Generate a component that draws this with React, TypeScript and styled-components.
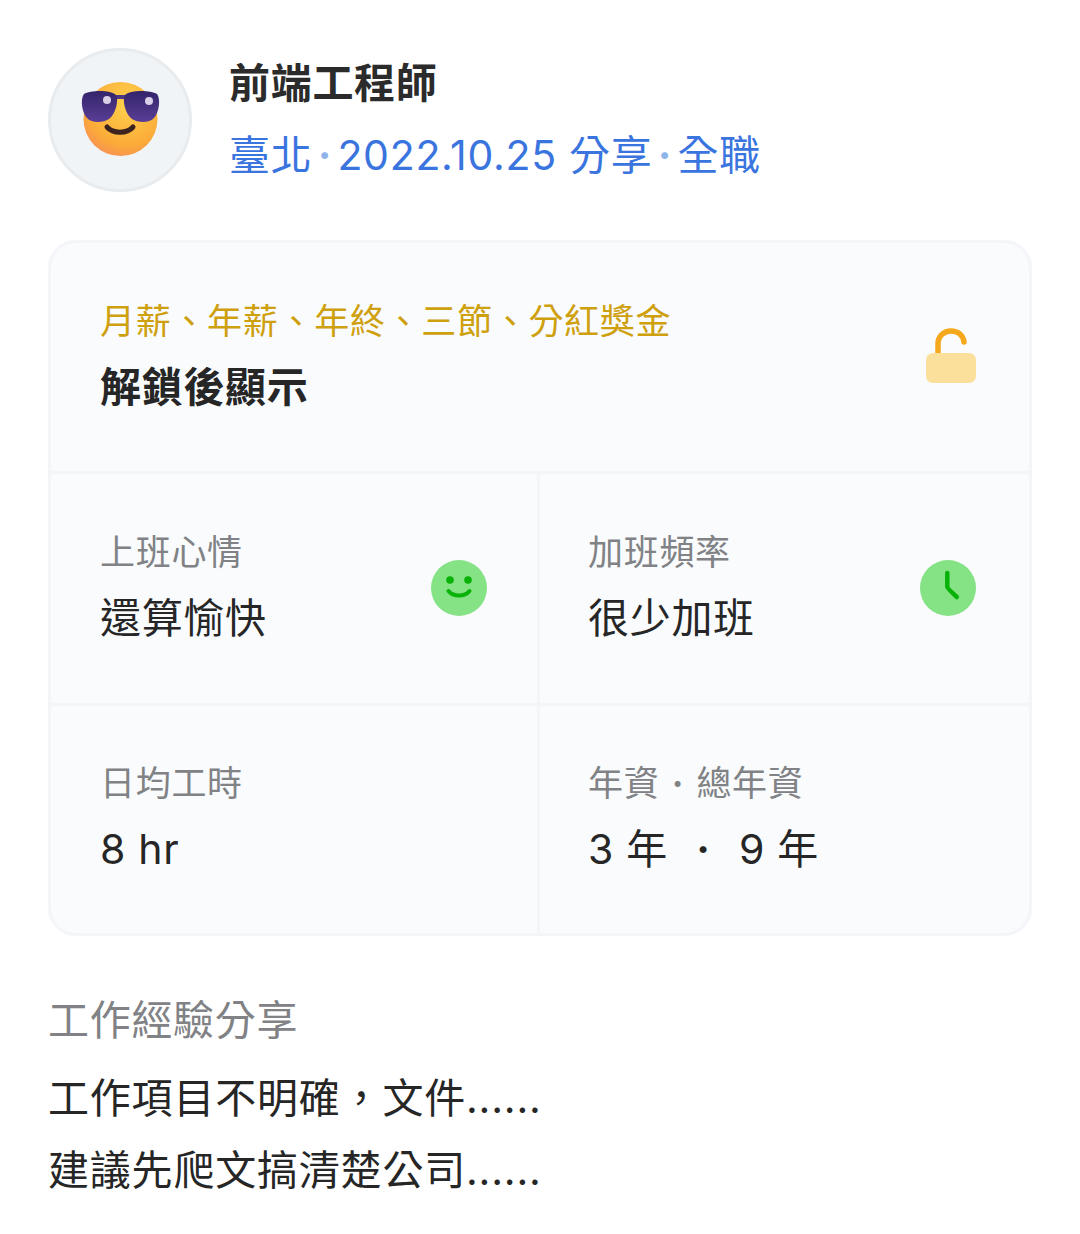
import React from 'react';
import styled, { createGlobalStyle } from 'styled-components';

const GlobalStyle = createGlobalStyle`
  html, body {
    margin: 0;
    padding: 0;
    background: #fff;
  }
  body {
    font-family: Inter, "Noto Sans CJK TC", sans-serif;
    letter-spacing: 0.7px;
  }
`;

const Page = styled.main`
  width: 1080px;
  height: 1234px;
  box-sizing: border-box;
  padding: 48px 48px 0;
  overflow: hidden;
`;

const Header = styled.header`
  display: flex;
  align-items: flex-start;
  gap: 37px;
`;

const Avatar = styled.div`
  width: 144px;
  height: 144px;
  box-sizing: border-box;
  border-radius: 50%;
  background: #f1f4f6;
  border: 3px solid #e9ecef;
  display: flex;
  align-items: center;
  justify-content: center;
  flex-shrink: 0;
`;

const HeaderText = styled.div`
  display: flex;
  flex-direction: column;
  gap: 14px;
  padding-top: 6px;
`;

const JobTitle = styled.h1`
  margin: 0;
  font-size: 41px;
  line-height: 58px;
  font-weight: 700;
  color: #2b2b2b;
`;

const Meta = styled.div`
  display: flex;
  align-items: center;
  font-size: 41px;
  line-height: 58px;
  color: #3a74df;
`;

const Dot = styled.span`
  width: 25px;
  text-align: center;
  font-weight: 700;
  color: #8fb4ea;
`;

const Card = styled.section`
  margin-top: 48px;
  width: 984px;
  box-sizing: border-box;
  border: 3px solid #f3f5f8;
  border-radius: 28px;
  background: #f9fbfd;
  overflow: hidden;
`;

const LockRow = styled.div`
  height: 231px;
  box-sizing: border-box;
  padding: 0 52px 2px 49px;
  display: flex;
  align-items: center;
  justify-content: space-between;
  border-bottom: 3px solid #f3f5f8;
`;

const Grid = styled.div`
  display: grid;
  grid-template-columns: 489px 1fr;
  grid-template-rows: 232px 227px;
`;

const Cell = styled.div<{ $right?: boolean; $last?: boolean }>`
  box-sizing: border-box;
  padding: 0 ${(p) => (p.$right ? 53 : 50)}px 4px ${(p) => (p.$right ? 48 : 49)}px;
  display: flex;
  align-items: center;
  justify-content: space-between;
  border-right: ${(p) => (p.$right ? 'none' : '3px solid #f3f5f8')};
  border-bottom: ${(p) => (p.$last ? 'none' : '3px solid #f3f5f8')};

  svg {
    margin-top: 3px;
  }
`;

const Stack = styled.div`
  display: flex;
  flex-direction: column;
  gap: 12px;
`;

const Label = styled.div<{ $gold?: boolean }>`
  font-size: 35px;
  line-height: 50px;
  color: ${(p) => (p.$gold ? '#cfa00d' : '#808285')};
  white-space: pre;
`;

const Value = styled.div<{ $bold?: boolean }>`
  font-size: 41px;
  line-height: 58px;
  font-weight: ${(p) => (p.$bold ? 700 : 400)};
  color: #262626;
  white-space: pre;
`;

const LabelSep = styled.span`
  display: inline-block;
  width: 37px;
  text-align: center;
  font-weight: 700;
`;

const ValueSep = styled.span`
  display: inline-block;
  width: 71px;
  text-align: center;
  font-weight: 700;
`;

const Experience = styled.section`
  margin-top: 54px;
  display: flex;
  flex-direction: column;
`;

const ExperienceTitle = styled.h2`
  margin: 0 0 12px;
  font-size: 41px;
  line-height: 60px;
  font-weight: 400;
  color: #808285;
`;

const ExperienceLine = styled.p`
  margin: 0;
  font-size: 41px;
  line-height: 72px;
  letter-spacing: 0.8px;
  color: #262626;
`;

const CoolFace = () => (
  <svg width="83" height="78" viewBox="0 0 83 78">
    <defs>
      <radialGradient id="face" cx="0.6" cy="0.3" r="0.85">
        <stop offset="0" stopColor="#ffd24d" />
        <stop offset="0.65" stopColor="#fbab38" />
        <stop offset="0.9" stopColor="#f88f55" />
        <stop offset="1" stopColor="#f0788a" />
      </radialGradient>
      <linearGradient id="lens" x1="0" y1="0" x2="0" y2="1">
        <stop offset="0" stopColor="#33246b" />
        <stop offset="1" stopColor="#5a3e96" />
      </linearGradient>
    </defs>
    <circle cx="41.5" cy="38" r="37" fill="url(#face)" />
    <path d="M34 16h15" stroke="#4a3a85" strokeWidth="4" />
    <path d="M5 13C12 9 32 9 37 14c3 4 0 19-7 24-6 4-18 4-22-1C3 32 1 18 5 13z" fill="url(#lens)" />
    <path d="M78 13C71 9 51 9 46 14c-3 4 0 19 7 24 6 4 18 4 22-1 5-5 7-19 3-24z" fill="url(#lens)" />
    <circle cx="28" cy="19" r="4" fill="#d9cfe6" />
    <circle cx="70" cy="20" r="4" fill="#d9cfe6" />
    <path d="M28 46c6 7 20 7 26 0" fill="none" stroke="#3c2320" strokeWidth="5" strokeLinecap="round" />
  </svg>
);

const LockIcon = () => (
  <svg width="52" height="56" viewBox="0 0 52 56">
    <path d="M13 26V16C13 8 19 3 26 3s12 4 13 11" fill="none" stroke="#f5a81c" strokeWidth="5.5" strokeLinecap="round" />
    <rect x="1" y="25" width="50" height="30" rx="7" fill="#fbe09b" />
  </svg>
);

const SmileIcon = () => (
  <svg width="56" height="56" viewBox="0 0 56 56">
    <circle cx="28" cy="28" r="28" fill="#85e285" />
    <circle cx="19" cy="20" r="3.8" fill="#08b208" />
    <circle cx="37" cy="20" r="3.8" fill="#08b208" />
    <path d="M17.5 31c5 6 16 6 21 0" fill="none" stroke="#08b208" strokeWidth="4" strokeLinecap="round" />
  </svg>
);

const ClockIcon = () => (
  <svg width="56" height="56" viewBox="0 0 56 56">
    <circle cx="28" cy="28" r="28" fill="#85e285" />
    <path d="M27.3 13v14c0 1 2 3 9.5 10" fill="none" stroke="#08b208" strokeWidth="4.5" strokeLinecap="round" strokeLinejoin="round" />
  </svg>
);

const App: React.FC = () => {
  return (
    <Page>
      <GlobalStyle />
      <Header>
        <Avatar>
          <CoolFace />
        </Avatar>
        <HeaderText>
          <JobTitle>前端工程師</JobTitle>
          <Meta>
            臺北<Dot>·</Dot>2022.10.25 分享<Dot>·</Dot>全職
          </Meta>
        </HeaderText>
      </Header>

      <Card>
        <LockRow>
          <Stack>
            <Label $gold>月薪、年薪、年終、三節、分紅獎金</Label>
            <Value $bold>解鎖後顯示</Value>
          </Stack>
          <LockIcon />
        </LockRow>
        <Grid>
          <Cell>
            <Stack>
              <Label>上班心情</Label>
              <Value>還算愉快</Value>
            </Stack>
            <SmileIcon />
          </Cell>
          <Cell $right>
            <Stack>
              <Label>加班頻率</Label>
              <Value>很少加班</Value>
            </Stack>
            <ClockIcon />
          </Cell>
          <Cell $last>
            <Stack>
              <Label>日均工時</Label>
              <Value>8 hr</Value>
            </Stack>
          </Cell>
          <Cell $right $last>
            <Stack>
              <Label>
                年資<LabelSep>·</LabelSep>總年資
              </Label>
              <Value>
                3 年<ValueSep>·</ValueSep>9 年
              </Value>
            </Stack>
          </Cell>
        </Grid>
      </Card>

      <Experience>
        <ExperienceTitle>工作經驗分享</ExperienceTitle>
        <ExperienceLine>工作項目不明確，文件......</ExperienceLine>
        <ExperienceLine>建議先爬文搞清楚公司......</ExperienceLine>
      </Experience>
    </Page>
  );
};

export default App;
